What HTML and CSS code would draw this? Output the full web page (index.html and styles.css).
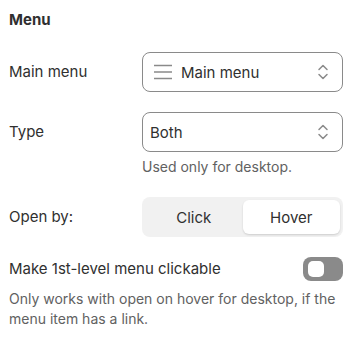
FILE: index.html
```html
<!DOCTYPE html>
<html>
<head>
    <title>Menu settings</title>
    <link rel="stylesheet" href="styles.css">
</head>
<body>
    <div class="panel">
        <h2 class="panel-title">Menu</h2>

        <div class="field">
            <div class="field-label">Main menu</div>
            <div class="select">
                <svg class="select-icon" width="20" height="20" viewBox="0 0 20 20">
                    <path d="M1 3.5h18M1 10h18M1 16.5h18" stroke="#8a8a8a" stroke-width="1.5" fill="none"/>
                </svg>
                <span class="select-value">Main menu</span>
                <svg class="select-caret" width="20" height="20" viewBox="0 0 20 20">
                    <path d="M6 7.5l4-4 4 4M6 12.5l4 4 4-4" stroke="#8a8a8a" stroke-width="1.5" fill="none" stroke-linecap="round" stroke-linejoin="round"/>
                </svg>
            </div>
        </div>

        <div class="field">
            <div class="field-label">Type</div>
            <div class="field-control">
                <div class="select">
                    <span class="select-value plain">Both</span>
                    <svg class="select-caret" width="20" height="20" viewBox="0 0 20 20">
                        <path d="M6 7.5l4-4 4 4M6 12.5l4 4 4-4" stroke="#8a8a8a" stroke-width="1.5" fill="none" stroke-linecap="round" stroke-linejoin="round"/>
                    </svg>
                </div>
                <div class="help">Used only for desktop.</div>
            </div>
        </div>

        <div class="field">
            <div class="field-label">Open by:</div>
            <div class="segmented">
                <button class="segment">Click</button>
                <button class="segment active">Hover</button>
            </div>
        </div>

        <div class="toggle-row">
            <div class="field-label">Make 1st-level menu clickable</div>
            <div class="toggle"><span class="toggle-knob"></span></div>
        </div>
        <div class="help wide">Only works with open on hover for desktop, if the menu item has a link.</div>
    </div>
</body>
</html>
```

FILE: styles.css
```css
body {
    margin: 0;
    font-family: Inter, 'Noto Sans', sans-serif;
    font-size: 15px;
    color: #303030;
    background-color: white;
}
.panel {
    padding: 10px 7px 0 9px;
}
.panel-title {
    margin: 0;
    font-size: 15px;
    line-height: 20px;
    font-weight: 650;
}
.field {
    display: grid;
    grid-template-columns: 133px 1fr;
    align-items: start;
    margin-top: 20px;
}
.panel-title + .field {
    margin-top: 22px;
}
.field-label {
    line-height: 40px;
}
.select {
    box-sizing: border-box;
    height: 40px;
    display: flex;
    align-items: center;
    padding: 0 9px 0 10px;
    border: 1px solid #8a8a8a;
    border-radius: 8px;
}
.select-icon {
    margin-right: 8px;
}
.select-value {
    flex: 1;
}
.select-value.plain {
    margin-left: -3px;
}
.help {
    margin-top: 5px;
    font-size: 14px;
    line-height: 20px;
    color: #616161;
}
.help.wide {
    margin-top: 8px;
}
.segmented {
    box-sizing: border-box;
    height: 40px;
    display: grid;
    grid-template-columns: 1fr 1fr;
    padding: 3px;
    border-radius: 8px;
    background-color: #f1f1f1;
}
.segment {
    border: none;
    background: none;
    font-family: inherit;
    font-size: 15px;
    color: #303030;
    border-radius: 6px;
    padding: 0;
}
.segment.active {
    background-color: white;
    box-shadow: 0 1px 2px rgba(0,0,0,0.15);
}
.toggle-row {
    display: flex;
    align-items: center;
    justify-content: space-between;
    margin-top: 20px;
}
.toggle-row .field-label {
    line-height: 24px;
}
.toggle {
    box-sizing: border-box;
    width: 40px;
    height: 24px;
    padding: 4px 5px;
    border-radius: 8px;
    background-color: #8a8a8a;
}
.toggle-knob {
    display: block;
    width: 16px;
    height: 16px;
    border-radius: 5px;
    background-color: white;
}
```
